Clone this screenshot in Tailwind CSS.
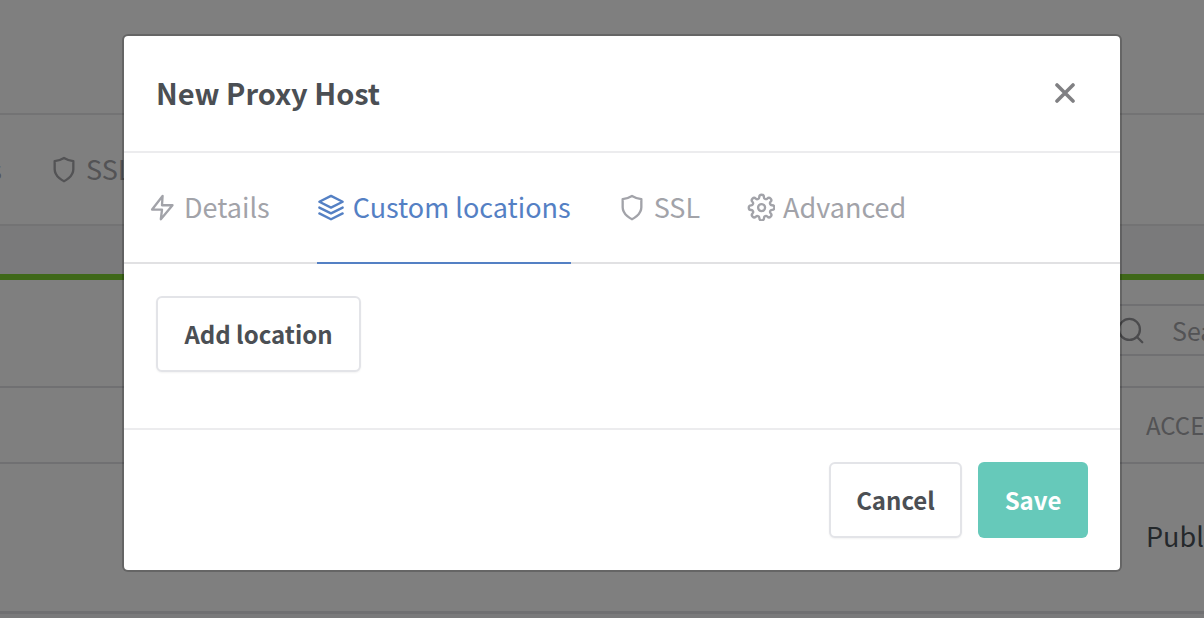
<!DOCTYPE html>
<html lang="en">
<head>
<meta charset="utf-8">
<meta name="viewport" content="width=device-width, initial-scale=1">
<title>New Proxy Host</title>
<script src="https://cdn.jsdelivr.net/npm/@tailwindcss/browser@4"></script>
</head>
<body class="relative min-h-screen overflow-hidden bg-[#f5f5f6] font-['Noto_Sans_CJK_JP','Noto_Sans',sans-serif] text-[27px] leading-10 text-[#495057]">

<!-- Page behind the dialog -->
<div class="overflow-hidden whitespace-nowrap">
  <header class="h-[115px] border-b-2 border-[#e6e6e8] bg-white"></header>
  <nav class="flex h-[111px] items-center gap-12 border-b-2 border-[#e6e6e8] bg-white pb-0.5 text-[#a6a6aa]">
    <span class="flex w-0.5 justify-end"><a href="#">Access Lists</a></span>
    <a href="#" class="flex items-center gap-2">
      <svg class="size-7" viewBox="0 0 24 24" fill="none" stroke="currentColor" stroke-width="2" stroke-linecap="round" stroke-linejoin="round"><path d="M12 22.500s8-3.500 8-10.200V5.200Q15.500 4.600 12 2.500 8.500 4.600 4 5.200v7.100c0 6.700 8 10.200 8 10.200z"/></svg>
      SSL Certificates
    </a>
  </nav>
  <main class="mt-12 border-t-6 border-[#7fd033] bg-white">
    <div class="flex pt-6">
      <div class="w-[1100px] shrink-0"></div>
      <label class="flex h-[52px] w-[420px] shrink-0 items-center gap-7 border-2 border-[#e0e0e4] pl-3.5">
        <svg class="size-7 shrink-0 text-[#96969a]" viewBox="0 0 24 24" fill="none" stroke="currentColor" stroke-width="2" stroke-linecap="round" stroke-linejoin="round"><circle cx="11.500" cy="11.500" r="9"/><path d="M22.500 22.500l-4.500-4.500"/></svg>
        <input type="search" aria-label="Search hosts" placeholder="Search Host…" class="w-full bg-transparent text-[25px] placeholder:text-[#a6a6aa]">
      </label>
    </div>
    <table class="mt-[30px] w-[1500px] table-fixed border-collapse text-left">
      <thead>
        <tr class="h-[76px] border-y-2 border-[#e0e0e4] text-2xl text-[#a6a6aa]">
          <th class="w-[1122px]"></th>
          <th class="px-6 font-normal">ACCESS</th>
        </tr>
      </thead>
      <tbody>
        <tr class="h-[149px] border-b-3 border-[#e0e0e4]">
          <td></td>
          <td class="px-6 pb-0.5">Public</td>
        </tr>
      </tbody>
    </table>
  </main>
</div>

<!-- Dialog -->
<div class="absolute inset-0 bg-black/50 pt-[34px] pr-[82px] pl-[122px]">
  <section role="dialog" aria-modal="true" aria-labelledby="dialog-title" class="rounded-md border-2 border-black/20 bg-white bg-clip-padding">
    <header class="flex h-[117px] items-center justify-between border-b-2 border-[#ececee] pr-10 pb-1 pl-8">
      <h1 id="dialog-title" class="text-[29px] font-bold text-[#4b4f54]">New Proxy Host</h1>
      <button type="button" aria-label="Close" class="p-1 text-[#808083]">
        <svg class="size-[22px]" viewBox="0 0 22 22" fill="none" stroke="currentColor" stroke-width="3.600" stroke-linecap="round"><path d="M3 4l16 16M19 4L3 20"/></svg>
      </button>
    </header>

    <nav class="flex h-[111px] gap-[47px] border-b-2 border-[#e1e1e3] pl-6 text-[#a2a3a9]">
      <a href="#" class="-mb-0.5 flex items-center gap-2 border-b-2 border-transparent pb-0.5">
        <svg class="size-7" viewBox="0 0 24 24" fill="none" stroke="currentColor" stroke-width="2" stroke-linecap="round" stroke-linejoin="round"><path d="M12.500 2.500L3.500 14.200h8.500l-1 8.300 10-12h-9l.5-8z"/></svg>
        Details
      </a>
      <a href="#" aria-current="page" class="-mb-0.5 flex items-center gap-2 border-b-2 border-[#5480c4] pb-0.5 text-[#5480c4]">
        <svg class="size-7" viewBox="0 0 24 24" fill="none" stroke="currentColor" stroke-width="2" stroke-linecap="round" stroke-linejoin="round"><path d="M12 2.500L2 7.500l10 5 10-5-10-5zM2 17.500l10 5 10-5M2 12.500l10 5 10-5"/></svg>
        Custom locations
      </a>
      <a href="#" class="-mb-0.5 flex items-center gap-2 border-b-2 border-transparent pb-0.5">
        <svg class="size-7" viewBox="0 0 24 24" fill="none" stroke="currentColor" stroke-width="2" stroke-linecap="round" stroke-linejoin="round"><path d="M12 22.500s8-3.500 8-10.200V5.200Q15.500 4.600 12 2.500 8.500 4.600 4 5.200v7.100c0 6.700 8 10.200 8 10.200z"/></svg>
        SSL
      </a>
      <a href="#" class="-mb-0.5 flex items-center gap-2 border-b-2 border-transparent pb-0.5">
        <svg class="size-7" viewBox="0 0 24 24" fill="none" stroke="currentColor" stroke-width="2" stroke-linecap="round" stroke-linejoin="round"><g transform="translate(0.500 0.500)"><circle cx="12" cy="12" r="3"/><path d="M19.400 15a1.650 1.650 0 0 0 .33 1.820l.06.06a2 2 0 0 1-2.830 2.830l-.06-.06a1.650 1.650 0 0 0-1.820-.33 1.650 1.650 0 0 0-1 1.510V21a2 2 0 0 1-4 0v-.09A1.650 1.650 0 0 0 9 19.400a1.650 1.650 0 0 0-1.820.33l-.06.06a2 2 0 0 1-2.830-2.830l.06-.06a1.650 1.650 0 0 0 .33-1.820 1.650 1.650 0 0 0-1.510-1H3a2 2 0 0 1 0-4h.09A1.650 1.650 0 0 0 4.600 9a1.650 1.650 0 0 0-.33-1.820l-.06-.06a2 2 0 0 1 2.830-2.830l.06.06a1.650 1.650 0 0 0 1.820.33H9a1.650 1.650 0 0 0 1-1.510V3a2 2 0 0 1 4 0v.09a1.650 1.650 0 0 0 1 1.510 1.650 1.650 0 0 0 1.820-.33l.06-.06a2 2 0 0 1 2.830 2.830l-.06.06a1.650 1.650 0 0 0-.33 1.820V9a1.650 1.650 0 0 0 1.510 1H21a2 2 0 0 1 0 4h-.09a1.650 1.650 0 0 0-1.510 1z"/></g></svg>
        Advanced
      </a>
    </nav>

    <div class="px-8 pt-8 pb-14">
      <button type="button" class="h-19 min-w-[205px] rounded-md border-2 border-[#e3e4e8] bg-white px-6 text-2xl font-bold text-[#4b4f54] shadow-xs">Add location</button>
    </div>

    <footer class="flex justify-end gap-4 border-t-2 border-[#ececee] p-8">
      <button type="button" class="h-19 min-w-[133px] rounded-md border-2 border-[#e3e4e8] bg-white px-6 text-2xl font-bold text-[#4b4f54] shadow-xs">Cancel</button>
      <button type="button" class="h-19 min-w-[110px] rounded-md bg-[#66c9ba] px-6 text-2xl font-bold text-white">Save</button>
    </footer>
  </section>
</div>
</body>
</html>
